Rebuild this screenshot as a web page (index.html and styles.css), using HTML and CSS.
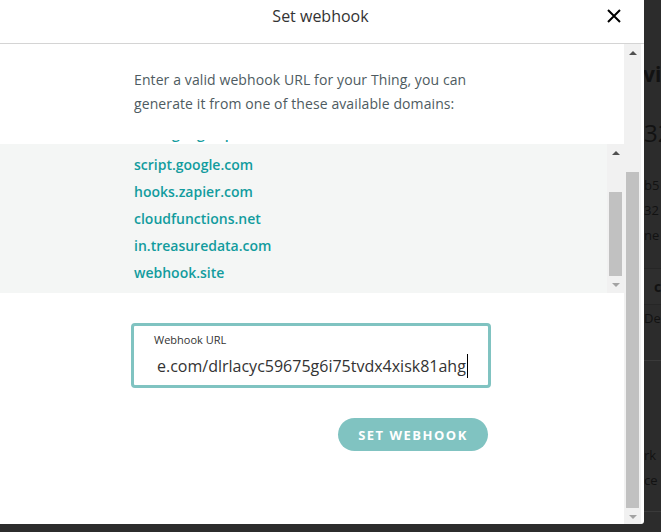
FILE: index.html
```html
<!DOCTYPE html>
<html lang="en">
<head>
    <meta charset="UTF-8">
    <meta name="viewport" content="width=device-width, initial-scale=1.0">
    <title>Set webhook</title>
    <link rel="stylesheet" href="styles.css">
</head>
<body>

    <!-- page behind the dialog, only a thin strip shows on the right -->
    <div class="page">
        <div class="pg-line pg-title">Device</div>
        <div class="pg-line pg-big">32</div>
        <div class="pg-line pg-small">b5</div>
        <div class="pg-line pg-small">32 D</div>
        <div class="pg-line pg-small">ne</div>
        <div class="pg-band">c</div>
        <div class="pg-line pg-small pg-de">De</div>
        <div class="pg-rule"></div>
        <div class="pg-line pg-small pg-rk">rk</div>
        <div class="pg-line pg-small">ce</div>
        <div class="pg-rule pg-rule-last"></div>
    </div>

    <div class="modal">
        <header class="modal-head">
            <h1>Set webhook</h1>
            <button class="close" aria-label="Close">
                <svg width="14" height="14" viewBox="0 0 14 14">
                    <path d="M1 1 L13 13 M13 1 L1 13" stroke="#000" stroke-width="2" fill="none"/>
                </svg>
            </button>
        </header>

        <div class="modal-body">
            <div class="body-content">
                <p class="intro">Enter a valid webhook URL for your Thing, you can generate it from one of these available domains:</p>

                <div class="domains">
                    <div class="domains-list">
                        <ul>
                            <li>www.googleapis.com</li>
                            <li>script.google.com</li>
                            <li>hooks.zapier.com</li>
                            <li>cloudfunctions.net</li>
                            <li>in.treasuredata.com</li>
                            <li>webhook.site</li>
                        </ul>
                    </div>
                    <div class="scrollbar inner-bar">
                        <div class="sb-btn"><span class="arrow up"></span></div>
                        <div class="sb-track"><div class="sb-thumb"></div></div>
                        <div class="sb-btn"><span class="arrow down"></span></div>
                    </div>
                </div>

                <div class="field">
                    <label>Webhook URL</label>
                    <div class="field-value">e.com/dlrlacyc59675g6i75tvdx4xisk81ahg<span class="caret"></span></div>
                </div>

                <div class="actions">
                    <button class="btn-set">SET WEBHOOK</button>
                </div>
            </div>

            <div class="scrollbar outer-bar">
                <div class="sb-btn"><span class="arrow up"></span></div>
                <div class="sb-track"><div class="sb-thumb"></div></div>
                <div class="sb-btn"><span class="arrow down"></span></div>
            </div>
        </div>
    </div>

</body>
</html>
```

FILE: styles.css
```css
body {
    font-family: 'Open Sans', 'Liberation Sans', sans-serif;
    margin: 0;
    padding: 0;
    background-color: #2c2c2c;
    width: 661px;
    height: 532px;
    overflow: hidden;
    position: relative;
}

/* page behind the overlay */
.page {
    position: absolute;
    top: 0;
    left: 0;
    width: 661px;
    height: 532px;
    color: #121212;
    padding-top: 60px;
    box-sizing: border-box;
}

.pg-line {
    white-space: nowrap;
}

.pg-title {
    font-size: 21px;
    font-weight: bold;
    line-height: 28px;
    padding-left: 615px;
}

.pg-big {
    font-size: 24px;
    line-height: 32px;
    margin-top: 29px;
    padding-left: 644px;
}

.pg-small {
    font-size: 13px;
    line-height: 25px;
    padding-left: 644px;
}

.pg-small:nth-child(3) {
    margin-top: 24px;
}

.pg-band {
    margin-top: 20px;
    height: 35px;
    line-height: 35px;
    border-top: 1px solid #262626;
    border-bottom: 1px solid #262626;
    background-color: #2e2e2e;
    padding-left: 654px;
    font-weight: bold;
    font-size: 14px;
}

.pg-de {
    margin-top: 1px;
}

.pg-rule {
    margin-top: 29px;
    height: 1px;
    background-color: #3a3a3a;
}

.pg-rk {
    margin-top: 82px;
}

.pg-rule-last {
    margin-top: 18px;
}

/* dialog */
.modal {
    position: absolute;
    top: 0;
    left: 0;
    width: 644px;
    height: 524px;
    background-color: #fff;
    border-bottom-right-radius: 3px;
    display: flex;
    flex-direction: column;
}

.modal-head {
    height: 43px;
    border-bottom: 1px solid #d4d4d4;
    display: flex;
    align-items: center;
    justify-content: center;
    position: relative;
    flex-shrink: 0;
}

.modal-head h1 {
    margin: 0;
    font-size: 16px;
    font-weight: normal;
    color: #333;
    margin-top: -11px;
    margin-left: -3px;
}

.close {
    position: absolute;
    top: 9px;
    left: 607px;
    width: 14px;
    height: 14px;
    padding: 0;
    border: none;
    background: none;
    display: block;
}

.close svg {
    display: block;
}

.modal-body {
    flex: 1;
    display: flex;
    padding-right: 3px;
    overflow: hidden;
}

.body-content {
    flex: 1;
    overflow: hidden;
    padding-top: 24px;
}

.intro {
    width: 356px;
    margin: 0 auto 0 134px;
    font-size: 14px;
    letter-spacing: 0.1px;
    line-height: 24px;
    color: #4e5b61;
}

.domains {
    margin-top: 24px;
    height: 153px;
    display: flex;
    background: linear-gradient(#fff 0 4px, #f4f6f5 4px);
}

.domains-list {
    flex: 1;
    overflow: hidden;
}

.domains-list ul {
    list-style: none;
    margin: -20px 0 0 0;
    padding: 0 0 0 134px;
}

.domains-list li {
    font-size: 14px;
    font-weight: 600;
    line-height: 27px;
    color: #129c9e;
}

.domains-list li:first-child {
    margin-bottom: 4px;
}

/* fake native scrollbars */
.scrollbar {
    width: 17px;
    display: flex;
    flex-direction: column;
    background-color: #f1f1f1;
    flex-shrink: 0;
}

.inner-bar {
    margin-top: 4px;
}

.sb-btn {
    height: 17px;
    display: flex;
    align-items: center;
    justify-content: center;
    flex-shrink: 0;
}

.sb-track {
    flex: 1;
    display: flex;
    flex-direction: column;
}

.sb-thumb {
    margin: 0 2px;
    background-color: #c1c1c1;
}

.inner-bar .sb-thumb {
    margin-top: 31px;
    height: 84px;
}

.outer-bar .sb-thumb {
    margin-top: 111px;
    height: 336px;
}

.arrow {
    width: 0;
    height: 0;
    border-left: 4px solid transparent;
    border-right: 4px solid transparent;
}

.arrow.up {
    border-bottom: 4px solid #505050;
}

.arrow.down {
    border-top: 4px solid #a3a3a3;
}

/* url field */
.field {
    width: 334px;
    margin: 30px 0 0 131px;
    border: 3px solid #80c3c1;
    border-radius: 4px;
    padding: 6px 0 7px 20px;
    box-sizing: content-box;
    overflow: hidden;
}

.field label {
    display: block;
    font-size: 11px;
    line-height: 15px;
    color: #333;
}

.field-value {
    margin-top: 7px;
    padding-left: 3px;
    font-size: 16px;
    line-height: 24px;
    color: #333;
    white-space: nowrap;
}

.caret {
    display: inline-block;
    width: 1px;
    height: 24px;
    background-color: #000;
    vertical-align: top;
    margin-left: 1px;
}

.actions {
    width: 360px;
    margin: 30px 0 0 131px;
    display: flex;
    justify-content: flex-end;
}

.btn-set {
    width: 150px;
    height: 33px;
    margin-right: 3px;
    border: none;
    border-radius: 17px;
    background-color: #80c3c1;
    color: #fff;
    font-family: 'Open Sans', 'Liberation Sans', sans-serif;
    font-size: 13px;
    font-weight: bold;
    letter-spacing: 1.5px;
    padding: 0;
}
```
